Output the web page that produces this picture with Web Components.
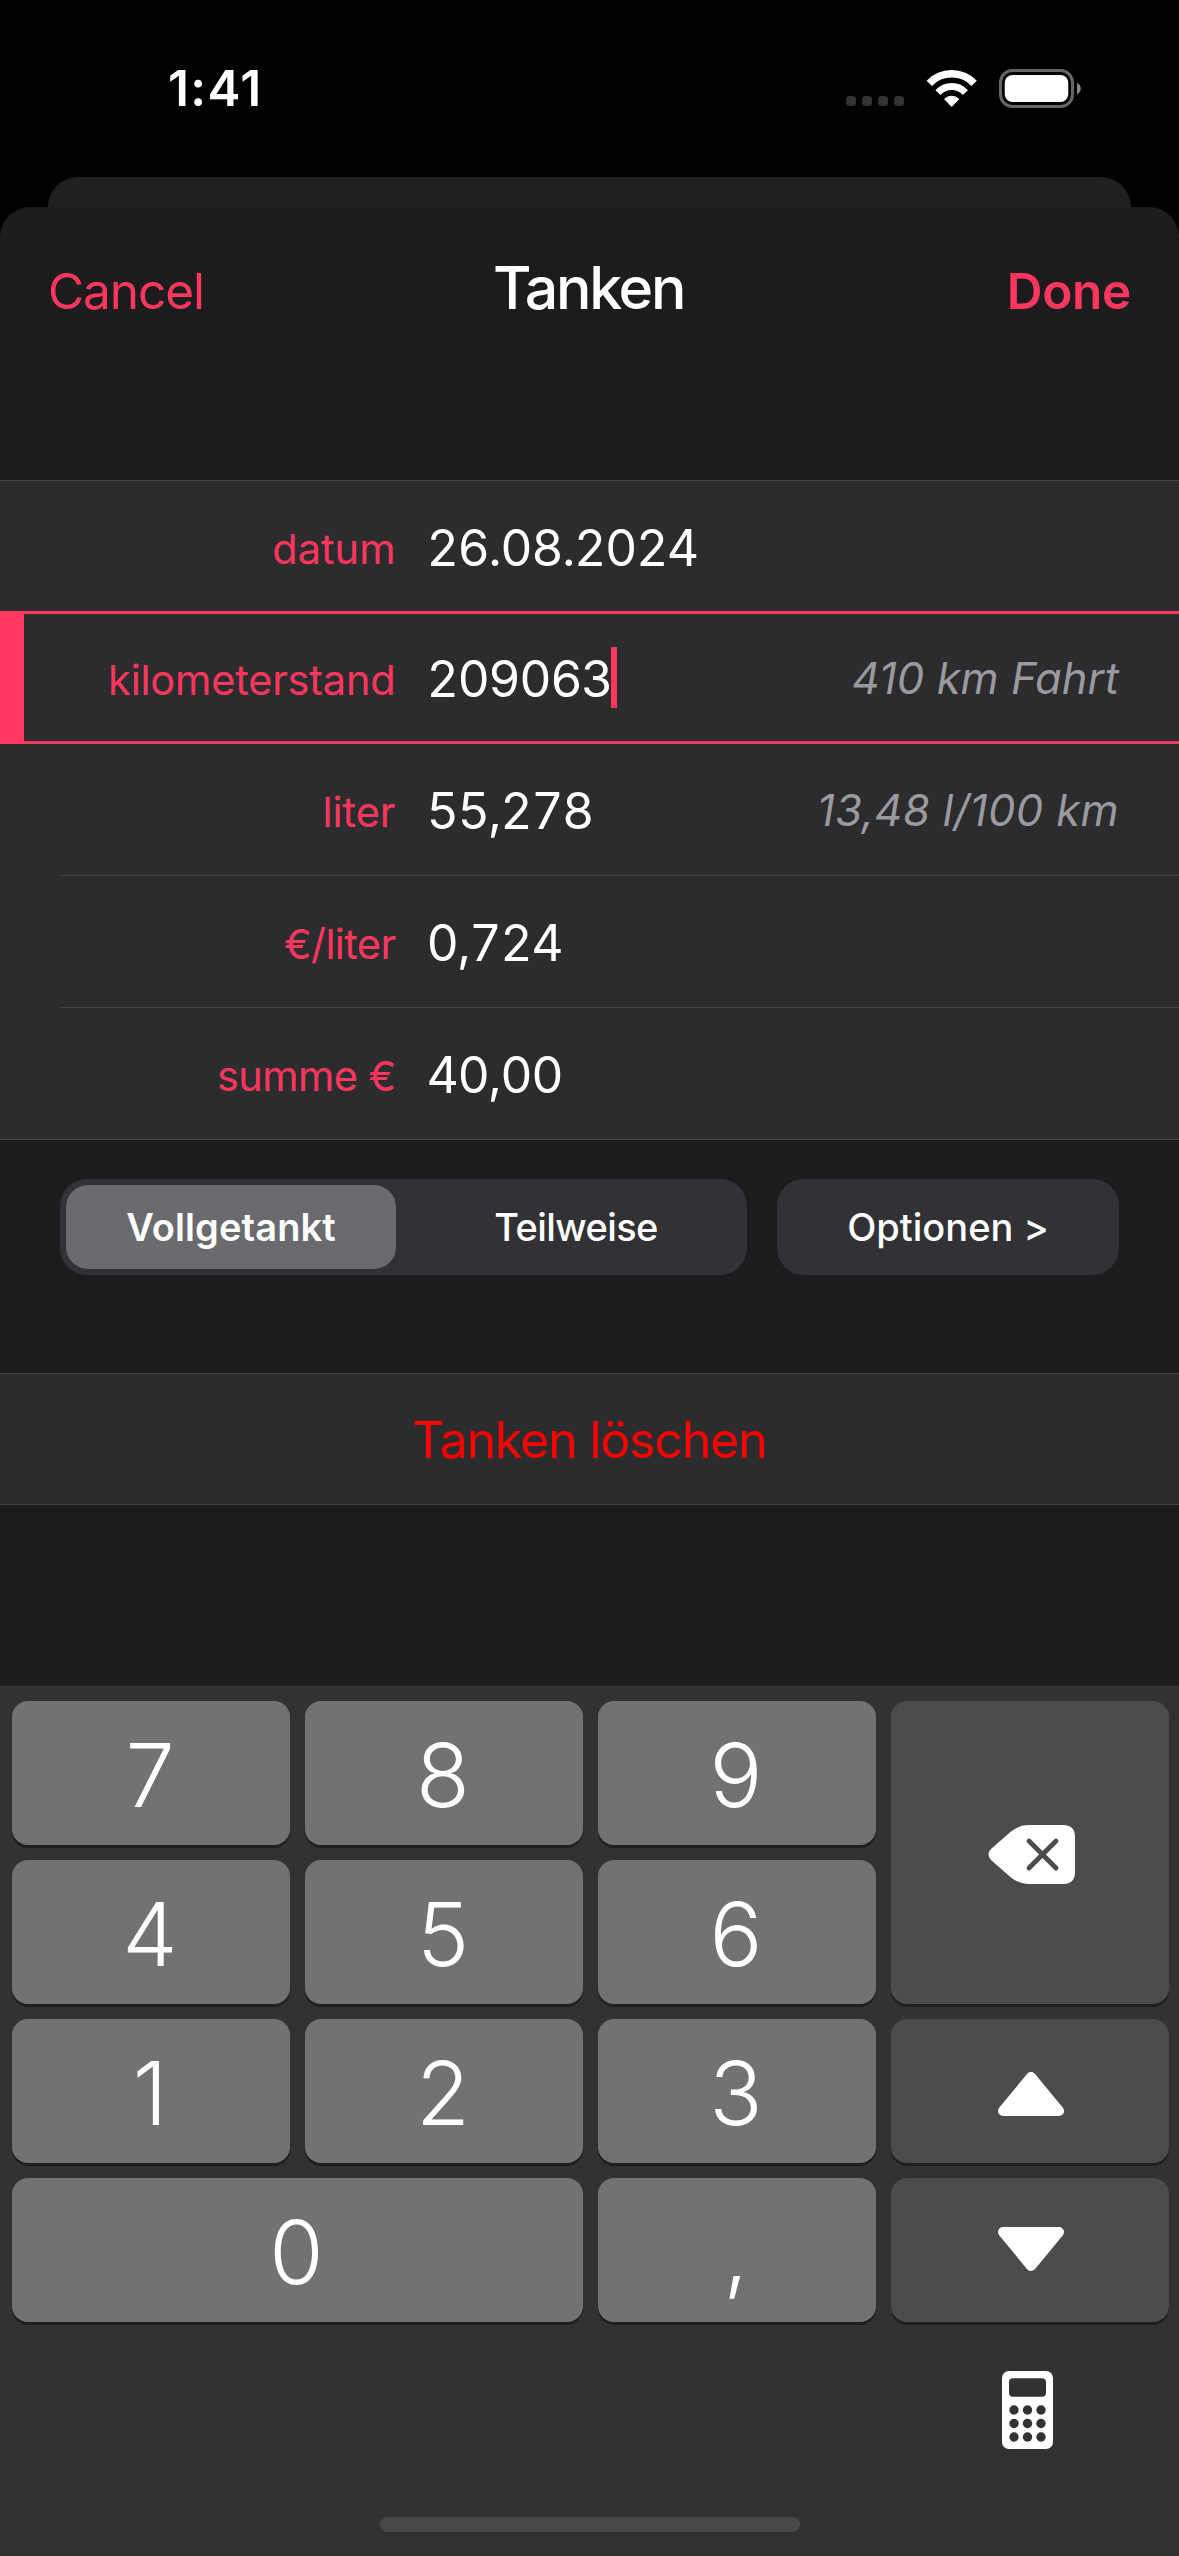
<!DOCTYPE html>
<html lang="de">
<head>
<meta charset="utf-8">
<title>Tanken</title>
<style>
body {
  margin: 0;
  background: #000;
}
</style>
</head>
<body>
<fuel-app>
  <status-bar slot="status">1:41</status-bar>
  <nav-header>
    <span slot="left">Cancel</span>
    <span slot="title">Tanken</span>
    <span slot="right">Done</span>
  </nav-header>
  <form-list>
    <form-row class="first" label="datum">26.08.2024</form-row>
    <form-row active label="kilometerstand">209063<span slot="note">410 km Fahrt</span></form-row>
    <form-row label="liter">55,278<span slot="note">13,48 l/100 km</span></form-row>
    <form-row label="€/liter" tight>0,724</form-row>
    <form-row class="last" label="summe €" tight>40,00</form-row>
  </form-list>
  <tool-row>
    <segmented-control>
      <span slot="on">Vollgetankt</span>
      <span slot="off">Teilweise</span>
    </segmented-control>
    <pill-button>Optionen &gt;</pill-button>
  </tool-row>
  <delete-row>Tanken löschen</delete-row>
  <number-pad slot="keyboard">
    <pad-key>7</pad-key>
    <pad-key>8</pad-key>
    <pad-key>9</pad-key>
    <pad-key dark tall icon="backspace"></pad-key>
    <pad-key>4</pad-key>
    <pad-key>5</pad-key>
    <pad-key>6</pad-key>
    <pad-key>1</pad-key>
    <pad-key>2</pad-key>
    <pad-key>3</pad-key>
    <pad-key dark icon="up"></pad-key>
    <pad-key wide>0</pad-key>
    <pad-key>,</pad-key>
    <pad-key dark icon="down"></pad-key>
  </number-pad>
</fuel-app>

<script>
function define(name, html, setup) {
  const template = document.createElement('template');
  template.innerHTML = html;

  customElements.define(name, class extends HTMLElement {
    constructor() {
      super();
      this.attachShadow({mode: 'open'});
      this.shadowRoot.appendChild(template.content.cloneNode(true));
      if (setup) setup(this, this.shadowRoot);
    }
  });
}

define('fuel-app', `
<style>
:host {
  --tint: #ff375f;
  --sheet: #1c1c1e;
  --cell: #2c2c2e;
  --line: #434346;
  display: flex;
  flex-direction: column;
  width: 1179px;
  height: 2556px;
  overflow: hidden;
  color: #fff;
  font-family: Inter, "Liberation Sans", sans-serif;
  white-space: nowrap;
}

.behind {
  flex: none;
  height: 30px;
  margin: 0 48px;
  border-radius: 30px 30px 0 0;
  background: #1f2021;
}

main {
  flex: 1;
  border-radius: 30px 30px 0 0;
  background: var(--sheet);
}
</style>
<slot name="status"></slot>
<div class="behind"></div>
<main><slot></slot></main>
<slot name="keyboard"></slot>
`);

define('status-bar', `
<style>
:host {
  flex: none;
  display: flex;
  align-items: center;
  box-sizing: border-box;
  height: 177px;
  padding: 0 98px 0 168px;
}

.time {
  flex: 1;
  padding-bottom: 2px;
  font-size: 49.5px;
  font-weight: 600;
  line-height: 60px;
  letter-spacing: 1.4px;
}

.dots {
  display: flex;
  gap: 6px;
  margin: 25px 22px 0 0;
}

.dots i {
  width: 10px;
  height: 10px;
  border-radius: 3.5px;
  background: #333;
}

svg {
  display: block;
}

.wifi {
  margin-right: 21px;
}
</style>
<div class="time"><slot></slot></div>
<div class="dots"><i></i><i></i><i></i><i></i></div>
<svg class="wifi" width="52" height="38" viewBox="0 0 52 38" fill="none" stroke="#fff">
  <path d="M3.3 13.3A31.2 31.2 0 0 1 48.1 13.3" stroke-width="7.6"/>
  <path d="M12 22.6A18.5 18.5 0 0 1 39.4 22.6" stroke-width="7"/>
  <path d="M25.7 36.4L18.6 29.1A10.2 10.2 0 0 1 32.8 29.1Z" fill="#fff" stroke-width="1" stroke-linejoin="round"/>
</svg>
<svg width="82" height="39" viewBox="0 0 82 39">
  <rect x="1.5" y="1.5" width="72" height="36" rx="12" fill="none" stroke="#666" stroke-width="3"/>
  <rect x="5.7" y="6" width="63.6" height="27" rx="8" fill="#fff"/>
  <path d="M78 14C83 16 83 23 78 25.3Z" fill="#888"/>
</svg>
`);

define('nav-header', `
<style>
:host {
  display: grid;
  grid-template-columns: 1fr auto 1fr;
  align-items: baseline;
  box-sizing: border-box;
  height: 273px;
  padding: 51px 48px 0;
  line-height: 60px;
  font-size: 49.5px;
}

.left, .right {
  color: var(--tint);
}

.left {
  letter-spacing: -1.07px;
}

.title {
  margin: 0 1px 0 -1px;
  font-size: 59px;
  font-weight: 500;
  letter-spacing: -2.3px;
}

.right {
  justify-self: end;
  font-weight: 600;
  letter-spacing: -.3px;
}
</style>
<div class="left"><slot name="left"></slot></div>
<div class="title"><slot name="title"></slot></div>
<div class="right"><slot name="right"></slot></div>
`);

define('form-list', `
<style>
:host {
  display: block;
  background: var(--cell);
}
</style>
<slot></slot>
`);

define('form-row', `
<style>
:host {
  display: flex;
  position: relative;
  align-items: center;
  box-sizing: border-box;
  height: 132px;
  padding-right: 60px;
  line-height: 60px;
}

:host(.first) {
  height: 131px;
  padding-top: 1px;
  border-top: 1px solid var(--line);
}

:host([active]) {
  height: 133px;
  border-top: 3px solid var(--tint);
  border-bottom: 3px solid var(--tint);
}

/* hairline starts at the cell inset, except under the last row */
:host(:not(.first):not([active]))::after {
  content: "";
  position: absolute;
  right: 0;
  bottom: 0;
  left: 60px;
  height: 1px;
  background: var(--line);
}

:host(.last)::after {
  left: 0 !important;
}

.bar {
  align-self: stretch;
  width: 24px;
  margin-right: -24px;
}

:host([active]) .bar {
  background: var(--tint);
}

label {
  width: 395.5px;
  padding-top: 4px;
  text-align: right;
  font-size: 41.5px;
  color: var(--tint);
}

:host([active]) label {
  letter-spacing: -.2px;
}

:host([tight]) label {
  letter-spacing: -.6px;
}

.value {
  margin-left: 31px;
  padding-top: 2px;
  font-size: 50px;
  font-variant-numeric: tabular-nums;
  letter-spacing: -1.5px;
}

.caret {
  display: none;
  width: 6px;
  height: 61px;
  margin-left: -1.5px;
  background: var(--tint);
}

:host([active]) .caret {
  display: block;
}

.note {
  margin-left: auto;
  font-size: 43.5px;
  font-style: italic;
  letter-spacing: .4px;
  color: #9a9aa0;
}

:host([active]) .note {
  letter-spacing: .05px;
}
</style>
<div class="bar"></div>
<label></label>
<div class="value"><slot></slot></div>
<div class="caret"></div>
<div class="note"><slot name="note"></slot></div>
`, (host, root) => {
  root.querySelector('label').textContent = host.getAttribute('label');
});

define('tool-row', `
<style>
:host {
  display: flex;
  gap: 30px;
  padding: 39px 60px 98px;
  font-size: 38px;
  font-weight: 500;
  line-height: 84px;
  text-align: center;
}
</style>
<slot></slot>
`);

define('segmented-control', `
<style>
:host {
  flex: 1;
  display: flex;
  gap: 15px;
  padding: 6px;
  border-radius: 27px;
  background: #323236;
}

div {
  flex: 1 1 0;
  border-radius: 22px;
}

.on {
  background: #6a6a6f;
  font-weight: 600;
  letter-spacing: .1px;
}

.off {
  letter-spacing: -.6px;
}
</style>
<div class="on"><slot name="on"></slot></div>
<div class="off"><slot name="off"></slot></div>
`);

define('pill-button', `
<style>
:host {
  width: 342px;
  padding: 6px 0;
  border-radius: 27px;
  background: #323236;
}
</style>
<slot></slot>
`);

define('delete-row', `
<style>
:host {
  display: block;
  padding-top: 2px;
  border: solid var(--line);
  border-width: 1px 0;
  background: var(--cell);
  color: #f00;
  font-size: 50px;
  line-height: 128px;
  letter-spacing: -1.16px;
  text-align: center;
}
</style>
<slot></slot>
`);

define('number-pad', `
<style>
:host {
  flex: none;
  display: flex;
  flex-direction: column;
  box-sizing: border-box;
  height: 870px;
  padding: 15px 10px 24px 12px;
  background: #323232;
}

.keys {
  display: grid;
  grid-template-columns: repeat(4, 278px);
  grid-auto-rows: 144px;
  gap: 15px;
}

.calculator {
  display: block;
  margin: 49px 116px 0 auto;
}

.home {
  width: 420px;
  height: 15px;
  margin: auto auto 0 368px;
  border-radius: 8px;
  background: #484848;
}
</style>
<div class="keys"><slot></slot></div>
<svg class="calculator" width="51" height="78" viewBox="0 0 51 78">
  <rect width="51" height="78" rx="7" fill="#fff"/>
  <g fill="#323232">
    <rect x="7" y="7.3" width="37" height="18.5" rx="4"/>
    <circle cx="12" cy="39" r="4.7"/>
    <circle cx="25.5" cy="39" r="4.7"/>
    <circle cx="39" cy="39" r="4.7"/>
    <circle cx="12" cy="52.5" r="4.7"/>
    <circle cx="25.5" cy="52.5" r="4.7"/>
    <circle cx="39" cy="52.5" r="4.7"/>
    <circle cx="12" cy="66" r="4.7"/>
    <circle cx="25.5" cy="66" r="4.7"/>
    <circle cx="39" cy="66" r="4.7"/>
  </g>
</svg>
<div class="home"></div>
`);

const icons = {
  backspace: `
<svg width="87" height="59" viewBox="0 0 87 59">
  <path d="M40 0H75Q87 0 87 12V47Q87 59 75 59H40Q31 59 23 52.5L3 35Q-2 29.5 3 24L23 6.5Q31 0 40 0Z" fill="#fff"/>
  <path d="M41 16L68 43M68 16L41 43" stroke="#4c4c4c" stroke-width="4.8" stroke-linecap="round"/>
</svg>`,
  up: `
<svg width="66" height="44" viewBox="0 0 66 44">
  <path d="M33 5L61 39H5Z" fill="#fff" stroke="#fff" stroke-width="10" stroke-linejoin="round"/>
</svg>`,
  down: `
<svg width="66" height="44" viewBox="0 0 66 44">
  <path d="M33 39L61 5H5Z" fill="#fff" stroke="#fff" stroke-width="10" stroke-linejoin="round"/>
</svg>`
};

define('pad-key', `
<style>
:host {
  display: flex;
  align-items: center;
  justify-content: center;
  box-sizing: border-box;
  padding: 4px 2px 0 0;
  border-radius: 16px;
  background: #727272;
  box-shadow: 0 3px 0 #1f1f1f;
  font-size: 88px;
  font-weight: 300;
  line-height: 100px;
}

:host([dark]) {
  padding: 4px 0 0 3px;
  background: #4c4c4c;
}

:host([tall]) {
  grid-row: span 2;
}

:host([wide]) {
  grid-column: span 2;
}

:host([icon="up"]) {
  padding: 6px 0 0 1px;
}

:host([icon="down"]) {
  padding: 0 0 3px 1px;
}
</style>
<slot></slot>
`, (host, root) => {
  const icon = icons[host.getAttribute('icon')];
  if (icon) root.querySelector('slot').insertAdjacentHTML('afterend', icon);
});
</script>
</body>
</html>
